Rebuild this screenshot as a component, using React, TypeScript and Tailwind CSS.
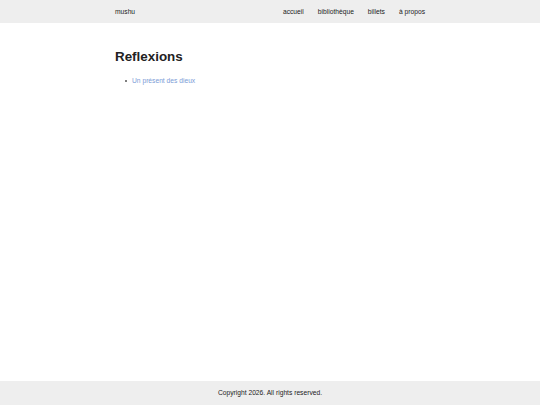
export default function App() {
  return (
    <div className="min-h-screen flex flex-col bg-white text-[#222]" style={{ fontFamily: '"Liberation Sans", Arial, sans-serif' }}>
      <header className="bg-[#eeeeee] h-[23px] pt-[2px]">
        <div className="w-[310px] mx-auto h-full flex items-center justify-between text-[6.7px]">
          <span>mushu</span>
          <nav className="flex gap-[14px]">
            <span>accueil</span>
            <span>bibliothèque</span>
            <span>billets</span>
            <span>à propos</span>
          </nav>
        </div>
      </header>
      <main className="flex-1 w-[310px] mx-auto pt-[27px]">
        <h1 className="text-[13.4px] font-bold leading-none">Reflexions</h1>
        <ul className="pl-[10px] mt-[13px] text-[6.7px]">
          <li className="flex items-center gap-[5px] text-[#7b9bd6]">
            <span className="w-[2px] h-[2px] rounded-full bg-[#555]" />
            Un présent des dieux
          </li>
        </ul>
      </main>
      <footer className="bg-[#eeeeee] h-[24px] pt-[1px] flex items-center justify-center text-[6.7px]">
        Copyright 2026. All rights reserved.
      </footer>
    </div>
  )
}
